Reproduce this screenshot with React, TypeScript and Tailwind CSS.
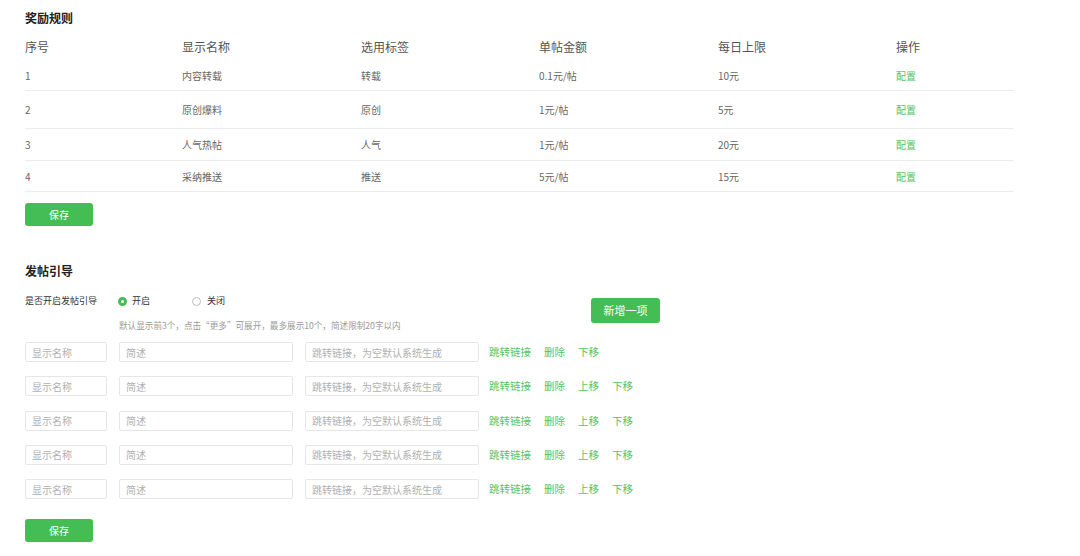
import React from "react"

const rules = [
  { no: "1", name: "内容转载", tag: "转载", amount: "0.1元/帖", limit: "10元", h: "h-[30px]" },
  { no: "2", name: "原创爆料", tag: "原创", amount: "1元/帖", limit: "5元", h: "h-[38px]" },
  { no: "3", name: "人气热帖", tag: "人气", amount: "1元/帖", limit: "20元", h: "h-[32px]" },
  { no: "4", name: "采纳推送", tag: "推送", amount: "5元/帖", limit: "15元", h: "h-[31px]" },
]

const cols = "grid grid-cols-[157px_179px_178px_179px_178px_118px]"

function SaveButton() {
  return (
    <button className="w-[68px] h-[23px] rounded-[3px] bg-[#44bd54] text-white text-[10px] flex items-center justify-center">
      保存
    </button>
  )
}

function Input({ placeholder, w }: { placeholder: string; w: string }) {
  return (
    <div
      className={`${w} h-[20px] border border-[#e6e6e6] rounded-[2px] px-[6px] flex items-center text-[10px] text-[#b0b0b0]`}
    >
      {placeholder}
    </div>
  )
}

export default function App() {
  return (
    <div
      className="w-[1080px] h-[556px] bg-white pl-[25px] pt-[9px] text-[#666]"
      style={{ fontFamily: '"Noto Sans CJK SC", "Noto Sans", sans-serif' }}
    >
      {/* 奖励规则 */}
      <h2 className="text-[12px] leading-[18px] font-bold text-[#222]">奖励规则</h2>
      <div className="w-[989px] mt-[5px]">
        <div className={`${cols} h-[29px] items-center text-[12px] text-[#555]`}>
          <div>序号</div>
          <div>显示名称</div>
          <div>选用标签</div>
          <div>单帖金额</div>
          <div>每日上限</div>
          <div>操作</div>
        </div>
        {rules.map((r) => (
          <div key={r.no} className={`${cols} ${r.h} items-center border-b border-[#ececec] text-[10px] text-[#666]`}>
            <div>{r.no}</div>
            <div>{r.name}</div>
            <div>{r.tag}</div>
            <div>{r.amount}</div>
            <div>{r.limit}</div>
            <div className="text-[#55c463]">配置</div>
          </div>
        ))}
      </div>
      <div className="mt-[11px]">
        <SaveButton />
      </div>

      {/* 发帖引导 */}
      <h2 className="mt-[36px] text-[12px] leading-[18px] font-bold text-[#222]">发帖引导</h2>
      <div className="mt-[15px] flex items-start">
        <div className="w-[566px]">
          <div className="flex items-center h-[12px] text-[9px]">
            <div className="w-[93px] text-[#333]">是否开启发帖引导</div>
            <div className="flex items-center gap-[5px] w-[74px]">
              <span className="w-[9px] h-[9px] rounded-full border-[3px] border-[#44bd54] bg-white" />
              <span className="text-[#333]">开启</span>
            </div>
            <div className="flex items-center gap-[6px]">
              <span className="w-[9px] h-[9px] rounded-full border border-[#bbb] bg-white" />
              <span className="text-[#333]">关闭</span>
            </div>
          </div>
          <div className="mt-[12px] pl-[94px] text-[8.6px] leading-[12px] text-[#999]">
            默认显示前3个，点击“更多”可展开，最多展示10个，简述限制20字以内
          </div>
        </div>
        <button className="mt-[3px] w-[69px] h-[25px] rounded-[3px] bg-[#44bd54] text-white text-[11px] flex items-center justify-center">
          新增一项
        </button>
      </div>

      <div className="mt-[11px] flex flex-col gap-[14.25px]">
        {[0, 1, 2, 3, 4].map((i) => (
          <div key={i} className="flex items-center h-[20px]">
            <Input placeholder="显示名称" w="w-[82px]" />
            <div className="ml-[12px]">
              <Input placeholder="简述" w="w-[174px]" />
            </div>
            <div className="ml-[12px]">
              <Input placeholder="跳转链接，为空默认系统生成" w="w-[174px]" />
            </div>
            <div className="ml-[10px] flex items-center gap-[13px] text-[10.5px] text-[#55c463]">
              <span>跳转链接</span>
              <span>删除</span>
              {i > 0 && <span>上移</span>}
              <span>下移</span>
            </div>
          </div>
        ))}
      </div>

      <div className="mt-[20px]">
        <SaveButton />
      </div>
    </div>
  )
}
